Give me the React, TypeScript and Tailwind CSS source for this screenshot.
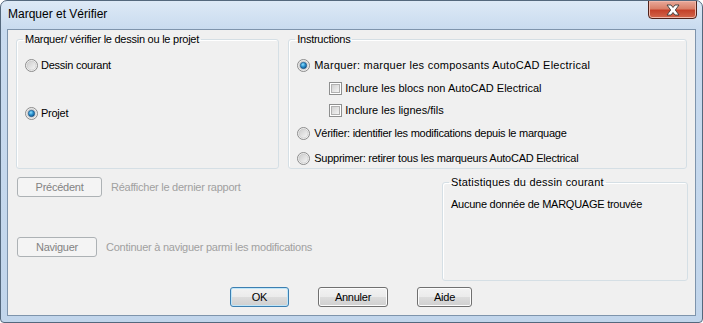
import React from 'react';

function Radio({ checked }: { checked?: boolean }) {
  return (
    <svg width="13" height="13" viewBox="0 0 13 13" className="shrink-0">
      <defs>
        <linearGradient id="rfill" x1="0" y1="0" x2="1" y2="1">
          <stop offset="0" stopColor="#cbcbcb" />
          <stop offset="1" stopColor="#f7f7f7" />
        </linearGradient>
        <radialGradient id="rdot" cx="0.4" cy="0.35" r="0.7">
          <stop offset="0" stopColor="#8fe0ff" />
          <stop offset="0.5" stopColor="#2a91cf" />
          <stop offset="1" stopColor="#0c4f85" />
        </radialGradient>
      </defs>
      <circle cx="6.5" cy="6.5" r="6" fill="#f4f4f4" stroke="#8a8a8a" strokeWidth="1" />
      <circle cx="6.5" cy="6.5" r="4.5" fill="url(#rfill)" stroke="#c2c2c2" strokeWidth="0.6" />
      {checked && <circle cx="6.5" cy="6.5" r="3.2" fill="url(#rdot)" stroke="#1b4e7c" strokeWidth="0.6" />}
    </svg>
  );
}

function Check() {
  return (
    <svg width="13" height="13" viewBox="0 0 13 13" className="shrink-0">
      <defs>
        <linearGradient id="cfill" x1="0" y1="0" x2="1" y2="1">
          <stop offset="0" stopColor="#cfcfcf" />
          <stop offset="1" stopColor="#f6f6f6" />
        </linearGradient>
      </defs>
      <rect x="0.5" y="0.5" width="12" height="12" fill="#ffffff" stroke="#8e8f8f" />
      <rect x="2.5" y="2.5" width="8" height="8" fill="url(#cfill)" stroke="#b1b1b1" />
    </svg>
  );
}

function WinButton({ label, disabled, isDefault, w }: { label: string; disabled?: boolean; isDefault?: boolean; w: string }) {
  if (disabled) {
    return (
      <div className={`${w} h-[20px] shrink-0 rounded-[3px] border border-[#adb2b5] bg-[#f4f4f4] flex items-center justify-center text-[#838383]`}>
        {label}
      </div>
    );
  }
  return (
    <div
      className={`${w} h-[20px] shrink-0 rounded-[3px] border ${
        isDefault ? 'border-[#3c7fb1] shadow-[inset_0_0_0_1px_#bfe6f9]' : 'border-[#707070] shadow-[inset_0_0_0_1px_#fcfcfc]'
      } bg-[linear-gradient(#f2f2f2_0%,#ebebeb_50%,#dddddd_50%,#cfcfcf_100%)] flex items-center justify-center text-black`}
    >
      {label}
    </div>
  );
}

export default function App() {
  return (
    <div
      className="w-[703px] h-[323px] rounded-t-[7px] rounded-b-[4px] border border-[#54687d] bg-[linear-gradient(#dde9f6_0px,#c9dbef_28px,#c1d5eb_100%)] flex flex-col overflow-hidden text-[11px] leading-[13px] tracking-[-0.25px] text-black"
      style={{ fontFamily: '"Liberation Sans", Arial, sans-serif' }}
    >
      {/* title bar */}
      <div className="h-[28px] shrink-0 flex items-start pl-[7px] pr-[5px]">
        <div className="pt-[6px] text-[12px] leading-[14px] tracking-normal text-black">Marquer et Vérifier</div>
        <div className="ml-auto w-[49px] h-[19px] -mt-[1px] rounded-b-[4px] border border-[#4f221b] bg-[linear-gradient(#e9a99a_0%,#d98069_45%,#c4412a_55%,#d2674c_100%)] shadow-[inset_0_0_0_1px_#f0b7a9] flex items-center justify-center">
          <svg width="16" height="12" viewBox="0 0 16 12">
            <path
              d="M2 1 L6 1 L8 3.5 L10 1 L14 1 L10.3 6 L14 11 L10 11 L8 8.5 L6 11 L2 11 L5.7 6 Z"
              fill="#ffffff"
              stroke="#3a3a3a"
              strokeWidth="0.9"
              strokeLinejoin="round"
            />
          </svg>
        </div>
      </div>

      {/* client area */}
      <div className="mx-[6px] mb-[6px] flex-1 border border-[#7e94ac] bg-[#f0f0f0] flex flex-col px-[8px] pt-[3px]">
        <div className="flex gap-[9px] h-[136px]">
          <fieldset className="w-[264px] h-full rounded-[3px] border border-[#d5dfe5] shadow-[inset_1px_1px_0_#ffffff] pl-[6px]">
            <legend className="px-[2px] leading-[13px]">Marquer/ vérifier le dessin ou le projet</legend>
            <div className="pl-[2px] flex flex-col">
              <div className="mt-[12px] h-[14px] flex items-center gap-[3px]">
                <Radio />
                <span>Dessin courant</span>
              </div>
              <div className="mt-[34px] h-[14px] flex items-center gap-[3px]">
                <Radio checked />
                <span>Projet</span>
              </div>
            </div>
          </fieldset>

          <fieldset className="w-[400px] h-full rounded-[3px] border border-[#d5dfe5] shadow-[inset_1px_1px_0_#ffffff] pl-[6px]">
            <legend className="px-[2px] leading-[13px]">Instructions</legend>
            <div className="pl-[2px] flex flex-col">
              <div className="mt-[12px] h-[14px] flex items-center gap-[4px]">
                <Radio checked />
                <span className="tracking-[0.25px]">Marquer: marquer les composants AutoCAD Electrical</span>
              </div>
              <div className="mt-[9px] ml-[32px] h-[14px] flex items-center gap-[3px]">
                <Check />
                <span className="tracking-normal">Inclure les blocs non AutoCAD Electrical</span>
              </div>
              <div className="mt-[8px] ml-[32px] h-[14px] flex items-center gap-[3px]">
                <Check />
                <span className="tracking-normal">Inclure les lignes/fils</span>
              </div>
              <div className="mt-[9px] h-[14px] flex items-center gap-[4px]">
                <Radio />
                <span>Vérifier: identifier les modifications depuis le marquage</span>
              </div>
              <div className="mt-[11px] h-[14px] flex items-center gap-[4px]">
                <Radio />
                <span>Supprimer: retirer tous les marqueurs AutoCAD Electrical</span>
              </div>
            </div>
          </fieldset>
        </div>

        <div className="flex h-[110px]">
          <div className="flex flex-col pl-[1px]">
            <div className="mt-[8px] flex items-center gap-[9px]">
              <WinButton label="Précédent" disabled w="w-[85px]" />
              <span className="text-[#a0a0a0]">Réafficher le dernier rapport</span>
            </div>
            <div className="mt-[40px] flex items-center gap-[9px]">
              <WinButton label="Naviguer" disabled w="w-[80px]" />
              <span className="text-[#a0a0a0]">Continuer à naviguer parmi les modifications</span>
            </div>
          </div>
          <fieldset className="ml-auto -mr-[1px] mt-[7px] w-[246px] h-[105px] rounded-[3px] border border-[#d5dfe5] shadow-[inset_1px_1px_0_#ffffff] pl-[6px]">
            <legend className="px-[2px] leading-[13px] tracking-[0.2px]">Statistiques du dessin courant</legend>
            <div className="pl-[2px] mt-[9px]">Aucune donnée de MARQUAGE trouvée</div>
          </fieldset>
        </div>

        <div className="flex gap-[29px] pl-[214px] mt-[8px]">
          <WinButton label="OK" isDefault w="w-[59px]" />
          <WinButton label="Annuler" w="w-[70px]" />
          <WinButton label="Aide" w="w-[55px]" />
        </div>
      </div>
    </div>
  );
}
